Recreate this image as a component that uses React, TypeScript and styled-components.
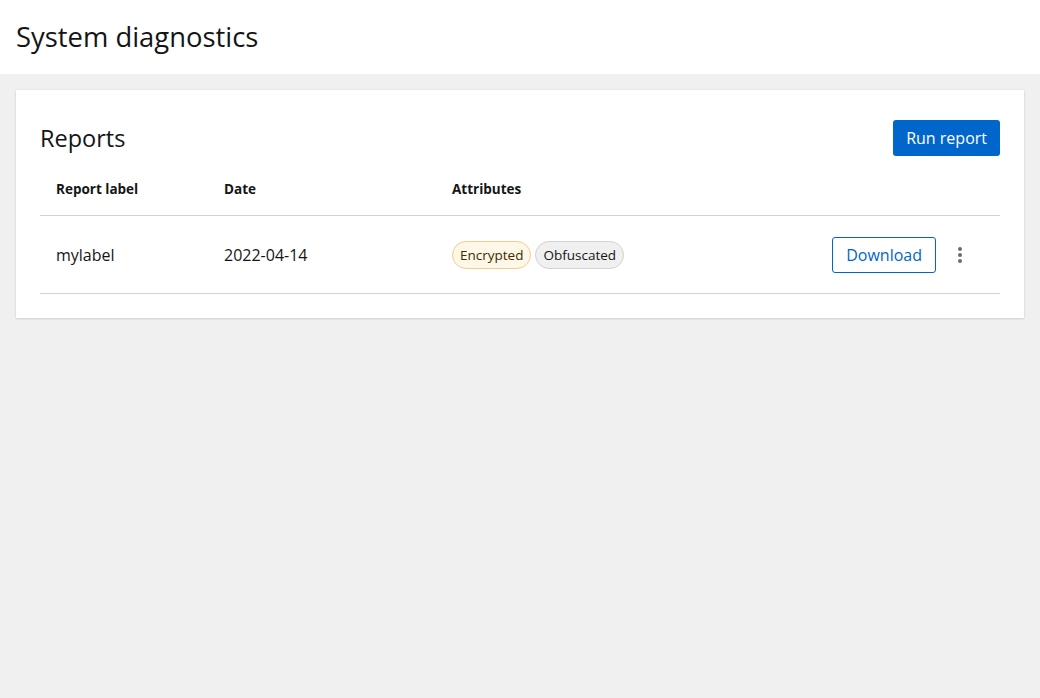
import styled, { createGlobalStyle } from 'styled-components';

const colors = {
  text: '#151515',
  pageBg: '#f0f0f0',
  white: '#ffffff',
  blue: '#0066cc',
  border: '#d2d2d2',
  kebab: '#6a6e73',
  goldBg: '#fdf7e7',
  goldBorder: '#f6cc8c',
  goldText: '#3d2c00',
  greyBg: '#f0f0f0',
};

const GlobalStyle = createGlobalStyle`
  html, body {
    margin: 0;
    padding: 0;
    background: ${colors.pageBg};
  }
  body {
    font-family: "Open Sans", "Liberation Sans", sans-serif;
    color: ${colors.text};
  }
  * {
    box-sizing: border-box;
  }
`;

const reports = [
  { label: 'mylabel', date: '2022-04-14', attributes: ['Encrypted', 'Obfuscated'] },
];

const KebabIcon = () => (
  <svg width="4" height="16" viewBox="0 0 4 16" fill={colors.kebab}>
    <circle cx="2" cy="2" r="2" />
    <circle cx="2" cy="8" r="2" />
    <circle cx="2" cy="14" r="2" />
  </svg>
);

const App = () => {
  return (
    <Page>
      <GlobalStyle />
      <Header>
        <PageTitle>System diagnostics</PageTitle>
      </Header>
      <Main>
        <Card>
          <CardHeader>
            <CardTitle>Reports</CardTitle>
            <PrimaryButton>Run report</PrimaryButton>
          </CardHeader>
          <Table>
            <HeadRow>
              <Th>Report label</Th>
              <Th>Date</Th>
              <Th>Attributes</Th>
              <Th />
            </HeadRow>
            {reports.map((r) => (
              <BodyRow key={r.label}>
                <Td>{r.label}</Td>
                <Td>{r.date}</Td>
                <Td>
                  <LabelGroup>
                    {r.attributes.map((a) => (
                      <Label key={a} variant={a === 'Encrypted' ? 'gold' : 'grey'}>
                        {a}
                      </Label>
                    ))}
                  </LabelGroup>
                </Td>
                <ActionsCell>
                  <SecondaryButton>Download</SecondaryButton>
                  <KebabButton aria-label="Actions">
                    <KebabIcon />
                  </KebabButton>
                </ActionsCell>
              </BodyRow>
            ))}
          </Table>
        </Card>
      </Main>
    </Page>
  );
};

const Page = styled.div`
  min-height: 100vh;
  background: ${colors.pageBg};
`;

const Header = styled.header`
  background: ${colors.white};
  padding: 19px 16px;
`;

const PageTitle = styled.h1`
  margin: 0;
  font-size: 27.4px;
  font-weight: 400;
  line-height: 36px;
`;

const Main = styled.main`
  padding: 16px;
`;

const Card = styled.section`
  background: ${colors.white};
  padding: 24px;
  box-shadow: 0 1px 2px 0 rgba(3, 3, 3, 0.12), 0 0 2px 0 rgba(3, 3, 3, 0.06);
`;

const CardHeader = styled.div`
  display: flex;
  align-items: center;
  justify-content: space-between;
  height: 48px;
`;

const CardTitle = styled.h2`
  margin: 0;
  font-size: 23.5px;
  font-weight: 400;
  line-height: 30px;
`;

const PrimaryButton = styled.button`
  height: 36px;
  padding: 0 13px;
  border: none;
  border-radius: 3px;
  background: ${colors.blue};
  color: ${colors.white};
  font-family: inherit;
  font-size: 16px;
  cursor: pointer;
`;

const Table = styled.div`
  display: grid;
  grid-template-columns: 168px 228px 1fr auto;
`;

const HeadRow = styled.div`
  display: contents;
`;

const BodyRow = styled.div`
  display: contents;
`;

const Th = styled.div`
  height: 54px;
  padding: 0 16px;
  display: flex;
  align-items: center;
  font-size: 13.5px;
  font-weight: 700;
  border-bottom: 1px solid ${colors.border};
`;

const Td = styled.div`
  height: 78px;
  padding: 0 16px;
  display: flex;
  align-items: center;
  font-size: 16px;
  border-bottom: 1px solid ${colors.border};
`;

const ActionsCell = styled(Td)`
  padding-right: 16px;
`;

const LabelGroup = styled.div`
  display: flex;
  gap: 4px;
`;

const Label = styled.span<{ variant: 'gold' | 'grey' }>`
  display: inline-flex;
  align-items: center;
  height: 28px;
  padding: 0 7px;
  border-radius: 30em;
  font-size: 13.5px;
  border: 1px solid ${(p) => (p.variant === 'gold' ? colors.goldBorder : colors.border)};
  background: ${(p) => (p.variant === 'gold' ? colors.goldBg : colors.greyBg)};
  color: ${(p) => (p.variant === 'gold' ? colors.goldText : colors.text)};
`;

const SecondaryButton = styled.button`
  height: 36px;
  padding: 0 13px;
  border: 1px solid ${colors.blue};
  border-radius: 3px;
  background: ${colors.white};
  color: ${colors.blue};
  font-family: inherit;
  font-size: 16px;
  cursor: pointer;
`;

const KebabButton = styled.button`
  width: 48px;
  height: 36px;
  display: flex;
  align-items: center;
  justify-content: center;
  border: none;
  background: transparent;
  cursor: pointer;
  padding: 0;
`;

export default App;
